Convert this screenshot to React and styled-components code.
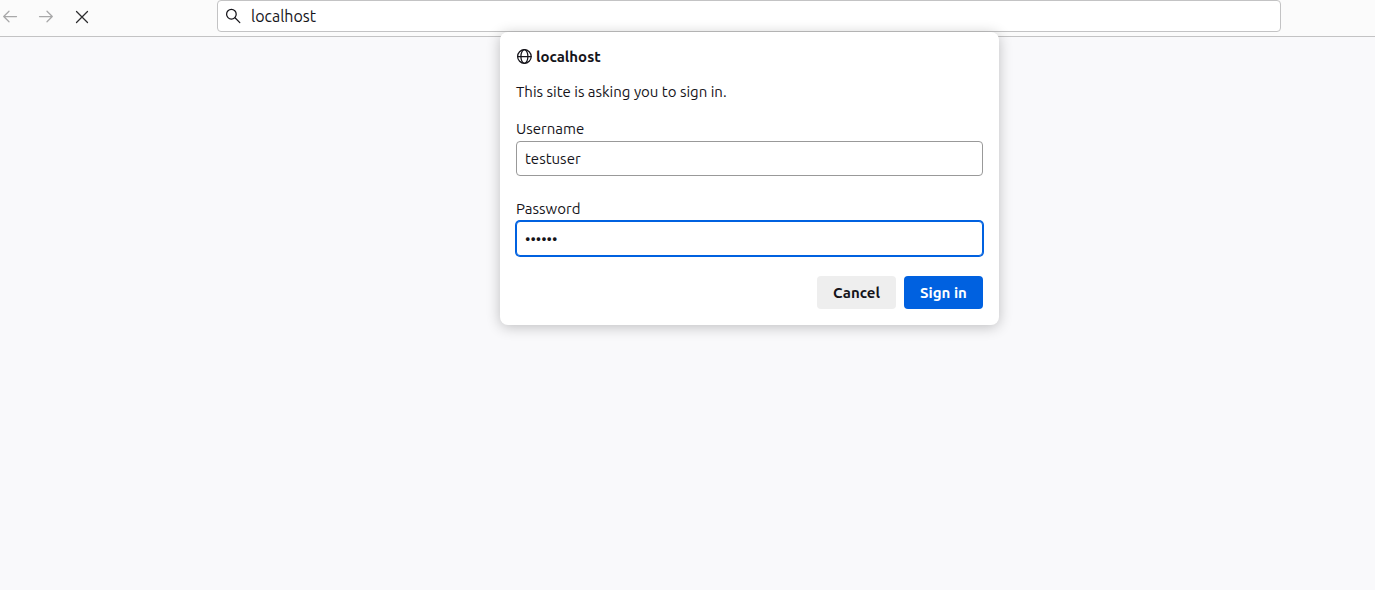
import React from "react";
import styled, { createGlobalStyle } from "styled-components";

const GlobalStyle = createGlobalStyle`
  *, *::before, *::after { box-sizing: border-box; }
  body {
    margin: 0;
    color: #15141a;
    font: 15px/18px Ubuntu, "Noto Sans", sans-serif;
  }
  button, input { font: inherit; color: inherit; }
`;

const Page = styled.div`
  min-height: 100vh;
  background: #f9f9fb;
`;

const Toolbar = styled.header`
  display: grid;
  grid-template-columns: 217px 1fr 94px;
  height: 37px;
  background: #fbfbfb;
  border-bottom: 1px solid #c3c3c4;
`;

const Nav = styled.nav`
  display: flex;
  align-items: center;
  gap: 20px;
  height: 33px;
  padding-left: 2px;
`;

const IconButton = styled.button`
  display: flex;
  width: 16px;
  height: 16px;
  padding: 0;
  border: 0;
  background: none;
  color: ${(p) => (p.disabled ? "#a8a8a9" : "#2b2b2d")};
`;

const AddressArea = styled.div`
  position: relative;
`;

const AddressBar = styled.label`
  display: flex;
  align-items: center;
  gap: 10px;
  height: 32px;
  padding: 0 7px;
  background: #fff;
  border: 1px solid #c3c3c4;
  border-radius: 4px;
`;

const AddressInput = styled.input`
  flex: 1;
  min-width: 0;
  padding: 0;
  border: 0;
  outline: 0;
  background: none;
  font-size: 16px;
`;

const Dialog = styled.form`
  position: absolute;
  z-index: 1;
  top: 32px;
  left: calc(50% - 249px);
  width: 499px;
  padding: 16px;
  background: #fff;
  border-radius: 8px;
  box-shadow: 0 2px 14px rgba(0, 0, 0, 0.24);
`;

const Title = styled.h1`
  display: flex;
  align-items: center;
  gap: 4px;
  margin: 0 0 17px;
  font-size: 15px;
  font-weight: 700;
`;

const Message = styled.p`
  margin: 0 0 19px;
`;

const Field = styled.div`
  display: flex;
  flex-direction: column;
  gap: 3px;
  margin-bottom: 24px;
  &:last-of-type { margin-bottom: 20px; }
`;

const TextInput = styled.input`
  width: 100%;
  height: 35px;
  padding: 0 8px;
  background: #fff;
  border: 1px solid ${(p) => (p.$active ? "#0061e0" : "#999999")};
  border-radius: 4px;
  outline: 0;
  box-shadow: ${(p) => (p.$active ? "0 0 0 1px #0061e0" : "none")};
`;

const Actions = styled.footer`
  display: flex;
  justify-content: flex-end;
  gap: 8px;
`;

const Button = styled.button`
  width: 79px;
  height: 33px;
  padding: 0;
  border: 0;
  border-radius: 4px;
  font-weight: 700;
  background: ${(p) => (p.$primary ? "#0061e0" : "#eeeeee")};
  color: ${(p) => (p.$primary ? "#fff" : "#15141a")};
`;

const Glyph = ({ children }) => (
  <svg width="16" height="16" viewBox="0 0 16 16" fill="none" stroke="currentColor"
    strokeWidth="1.25" strokeLinecap="round" strokeLinejoin="round" aria-hidden="true">
    {children}
  </svg>
);

export default function App() {
  return (
    <Page>
      <GlobalStyle />
      <Toolbar>
        <Nav aria-label="Navigation">
          <IconButton type="button" aria-label="Back" disabled>
            <Glyph><path d="M14.5 7.5H1.7M7 2.2 1.7 7.5 7 12.8" /></Glyph>
          </IconButton>
          <IconButton type="button" aria-label="Forward" disabled>
            <Glyph><path d="M1.5 7.5h12.8M9 2.2 14.3 7.5 9 12.8" /></Glyph>
          </IconButton>
          <IconButton type="button" aria-label="Stop">
            <Glyph><path d="m2.5 2.5 11 11M13.5 2.5l-11 11" /></Glyph>
          </IconButton>
        </Nav>
        <AddressArea>
          <AddressBar>
            <Glyph>
              <circle cx="6.4" cy="6.2" r="4.8" />
              <path d="m10 9.8 4.8 4.8" />
            </Glyph>
            <AddressInput aria-label="Address" defaultValue="localhost" />
          </AddressBar>
          <Dialog aria-labelledby="site" onSubmit={(e) => e.preventDefault()}>
            <Title id="site">
              <Glyph>
                <circle cx="8.4" cy="7.5" r="6.8" />
                <ellipse cx="8.4" cy="7.5" rx="3.5" ry="6.8" />
                <path d="M1.6 7.5h13.6" />
              </Glyph>
              localhost
            </Title>
            <Message>This site is asking you to sign in.</Message>
            <Field>
              <label htmlFor="username">Username</label>
              <TextInput id="username" defaultValue="testuser" />
            </Field>
            <Field>
              <label htmlFor="password">Password</label>
              <TextInput id="password" type="password" defaultValue="secret" $active />
            </Field>
            <Actions>
              <Button type="button">Cancel</Button>
              <Button type="submit" $primary>Sign in</Button>
            </Actions>
          </Dialog>
        </AddressArea>
      </Toolbar>
    </Page>
  );
}
